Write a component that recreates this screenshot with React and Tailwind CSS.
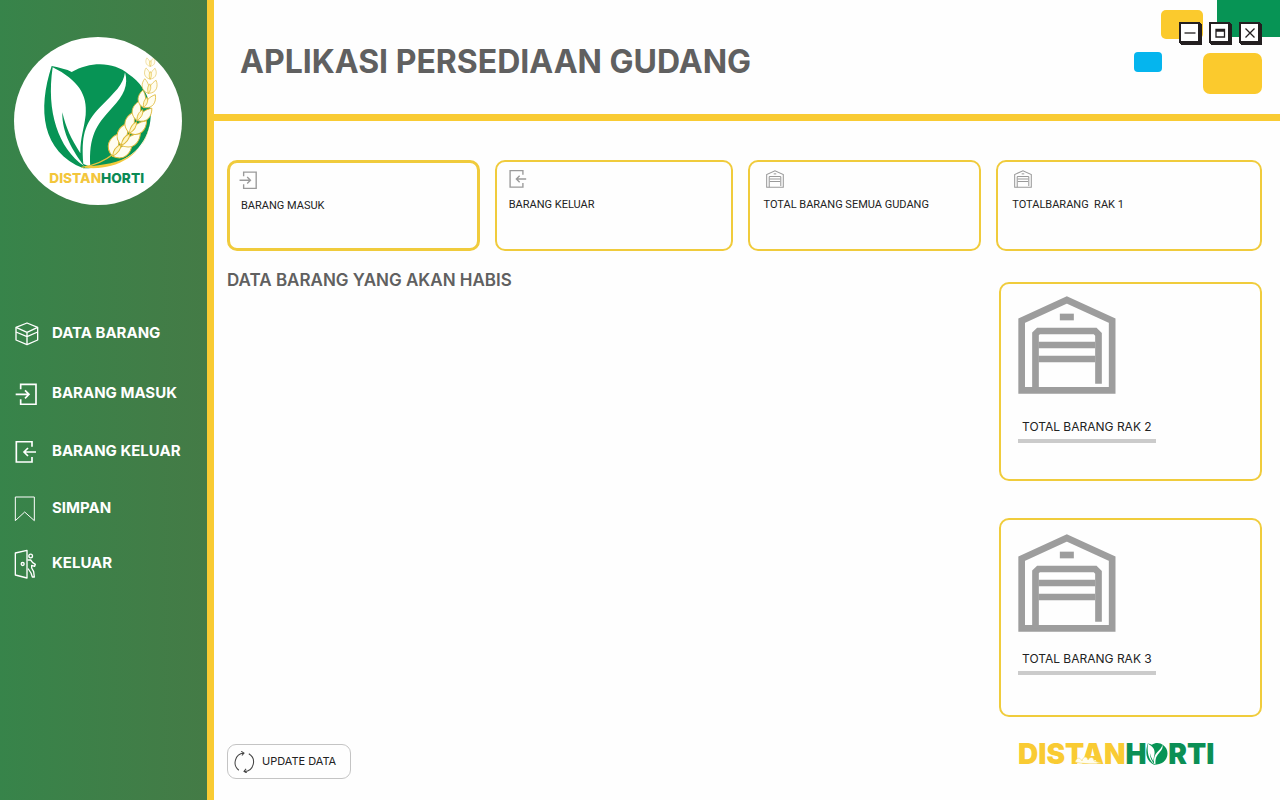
import React from "react";

function BoxIcon({ className }) {
  return (
    <svg viewBox="47 37 72 72" className={className} fill="none" stroke="currentColor" strokeWidth="4" strokeLinejoin="round" aria-hidden="true">
      <path d="M83 40 L115 53 V91 L83 105 L50 91 V53 Z" />
      <path d="M50 53 L83 68 L115 53 M50 67 L83 81 L115 67 M83 68 V105" />
    </svg>
  );
}

function EnterIcon({ className, stroke = 5 }) {
  return (
    <svg viewBox="46 213 66 66" className={className} fill="none" stroke="currentColor" strokeWidth={stroke} aria-hidden="true">
      <path d="M63 232 V217 H109 V277 H63 V262" />
      <path d="M48 247 H87 M76 235 L88 247 L76 259" />
    </svg>
  );
}

function LeaveIcon({ className, stroke = 5 }) {
  return (
    <svg viewBox="46 3 66 66" className={className} fill="none" stroke="currentColor" strokeWidth={stroke} aria-hidden="true">
      <path d="M97 20 V5 H50 V66 H97 V51" />
      <path d="M109 36 H73 M85 24 L73 36 L85 48" />
    </svg>
  );
}

function BookmarkIcon({ className }) {
  return (
    <svg viewBox="42 169 72 76" className={className} fill="none" stroke="currentColor" strokeWidth="3" aria-hidden="true">
      <path d="M46 171 H103 V242 L74 216 L46 242 Z" />
    </svg>
  );
}

function DoorIcon({ className }) {
  return (
    <svg viewBox="42 328 72 90" className={className} fill="none" stroke="currentColor" strokeWidth="4" strokeLinejoin="round" strokeLinecap="round" aria-hidden="true">
      <path d="M46 340 L81 332 V415 L46 406 Z" />
      <circle cx="68" cy="373" r="4.5" />
      <circle cx="92" cy="349" r="5.5" />
      <path d="M84 361 H92 L98 369 L106 374 L104 380 L95 377 V385 L101 396 L103 412 H97 L93 400 L85 388" />
    </svg>
  );
}

function GarageIcon({ className, stroke = 20 }) {
  return (
    <svg viewBox="86 79 293 294" className={className} fill="none" stroke="currentColor" strokeWidth={stroke} aria-hidden="true">
      <path d="M96.500 362 V153 L232 91 L368 153 V362 Z" />
      <path d="M138 362 V193 L147 184 H317 L327 194 V342" />
      <path d="M147 226 H317 M147 268 H317" />
      <path d="M211 142 H253" />
    </svg>
  );
}

function SyncIcon({ className }) {
  return (
    <svg viewBox="102 61 64 64" className={className} fill="none" stroke="currentColor" strokeWidth="3" aria-hidden="true">
      <path d="M119 117 A28 28 0 0 1 133 67 M126 62 L134 67 L128 74" />
      <path d="M148 69 A28 28 0 0 1 135 121 M142 125 L134 120 L140 113" />
    </svg>
  );
}

const grains = [
  [354, 386, 1, 36],
  [380, 354, 0.98, 36],
  [402, 318, 0.92, 32],
  [422, 281, 0.84, 28],
  [438, 243, 0.76, 20],
  [448, 202, 0.66, 8],
  [451, 163, 0.52, 2],
  [451, 128, 0.4, 0],
];

function LeafShapes() {
  return (
    <>
      <path
        d="M155 138 C180 144 200 147 215 156 C275 121 345 127 385 162 C455 208 468 290 436 352 C405 415 335 445 250 445 C125 395 112 270 155 138 Z"
        fill="#079455"
      />
      <path
        d="M158 142 C235 180 263 225 257 285 C252 330 241 350 241 400 C213 355 198 325 187 277 C185 340 220 395 252 438 C175 385 138 275 158 142 Z"
        fill="#fff"
      />
      <path
        d="M375 157 C386 195 372 226 335 265 C288 316 266 350 271 440 L250 432 C244 350 252 312 300 262 C344 216 370 196 375 157 Z"
        fill="#fff"
      />
    </>
  );
}

function Emblem() {
  return (
    <svg viewBox="42 51 504 504" className="size-42 rounded-full bg-white" role="img" aria-label="Distanhorti">
      <LeafShapes />
      <path d="M245 442 C290 436 315 422 340 402" fill="none" stroke="#e8c33c" strokeWidth="4" />
      <path d="M255 443 C330 452 430 420 449 312 C436 400 370 434 255 439 Z" fill="#f2c93c" />
      {grains.map(([x, y, s, r]) => (
        <g key={y} transform={`translate(${x} ${y}) rotate(${r}) scale(${s})`} fill="#fffdf0" stroke="#dfb93a" strokeWidth="3">
          <path d="M0 28 C-38 20 -40 -12 -26 -36 C-6 -20 4 4 0 28 Z" />
          <path d="M0 28 C-4 4 6 -20 26 -36 C40 -12 38 20 0 28 Z" />
          <path d="M0 28 C-10 10 -8 -4 0 -16 C8 -4 10 10 0 28 Z" fill="#fff6c4" />
        </g>
      ))}
      <text x="148" y="488" fontSize="41" fontWeight="800" fontFamily="Inter, sans-serif" fill="#f3c63c">
        DISTAN<tspan fill="#0b8a55">HORTI</tspan>
      </text>
    </svg>
  );
}

function Wordmark() {
  return (
    <p className="relative flex items-center text-[28px] leading-8 font-black text-[#f9cb33]">
      DISTAN
      <span className="text-[#0b8f55]">H</span>
      <span className="relative text-[#0b8f55]">
        O
        <svg viewBox="128 132 328 318" preserveAspectRatio="none" className="absolute inset-x-0 top-1 h-6 w-full bg-[#fefefe] py-px" aria-hidden="true">
          <LeafShapes />
        </svg>
      </span>
      <span className="text-[#0b8f55]">RTI</span>
      <svg viewBox="0 0 28 8" className="absolute bottom-1.5 left-14 h-2 w-7" fill="#fffdf0" stroke="#f3d76a" strokeWidth="0.6" aria-hidden="true">
        <path d="M1 6 C3 1 6 1 8 5 C9 0 13 0 14 4 C16 0 20 1 20 5 L27 7 C18 8 8 8 1 6 Z" />
      </svg>
    </p>
  );
}

const menu = [
  { label: "DATA BARANG", icon: <BoxIcon className="ml-px size-6 shrink-0" /> },
  { label: "BARANG MASUK", icon: <EnterIcon className="size-6 shrink-0 p-px" /> },
  { label: "BARANG KELUAR", icon: <LeaveIcon className="size-6 shrink-0 p-px" /> },
  { label: "SIMPAN", icon: <BookmarkIcon className="h-6.5 w-6" /> },
  { label: "KELUAR", icon: <DoorIcon className="h-7.5 w-6" /> },
];

const cards = [
  { label: "BARANG MASUK", icon: <EnterIcon className="size-4.5" />, box: "border-3 pt-2 pl-[9px]", indent: "pl-0.5" },
  { label: "BARANG KELUAR", icon: <LeaveIcon className="size-4.5" />, box: "border-2 pt-2 pl-3", indent: "" },
  { label: "TOTAL BARANG SEMUA GUDANG", icon: <GarageIcon stroke={17} className="ml-0.5 size-4.5" />, box: "border-2 pt-2 pl-3.5", indent: "" },
  { label: "TOTALBARANG  RAK 1", icon: <GarageIcon stroke={17} className="ml-0.5 size-4.5" />, box: "border-2 pt-2 pl-3.5", indent: "" },
];

function WindowButton({ label, children }) {
  return (
    <button
      type="button"
      aria-label={label}
      className="flex size-[21px] items-center justify-center border-2 border-[#231f20] bg-white text-[#231f20] shadow-[1px_1px_0_#231f20,2px_2px_0_#231f20]"
    >
      <svg viewBox="0 0 16 16" className="size-4 shrink-0" fill="none" stroke="currentColor" strokeWidth="1.300" aria-hidden="true">
        {children}
      </svg>
    </button>
  );
}

function RackPanel({ label, spacing }) {
  return (
    <article className={`flex h-[199px] flex-col items-start rounded-[10px] border-2 border-[#f0cc3c] px-[17px] ${spacing}`}>
      <GarageIcon className="size-[98px] text-[#9d9d9d]" />
      <h3 className="border-b-4 border-[#cbcbcb] px-1 pb-0.5 text-[12px] leading-5 text-[#222]">{label}</h3>
    </article>
  );
}

export default function App() {
  return (
    <div className="flex min-h-screen bg-[#fefefe] font-['Inter',sans-serif]">
      <aside className="w-[214px] shrink-0 border-r-7 border-[#f9cb33] bg-linear-to-r from-[#37844a] to-[#447b46] pt-[37px]">
        <div className="pl-3.5">
          <Emblem />
        </div>
        <nav className="mt-[98px] grid grid-rows-[61px_59px_57px_57px_53px] pl-3.5" aria-label="Menu">
          {menu.map((item) => (
            <a key={item.label} href="#" className="flex items-center gap-3.5 text-[15px] font-bold whitespace-nowrap text-white">
              <span className="flex w-6 shrink-0">{item.icon}</span>
              {item.label}
            </a>
          ))}
        </nav>
      </aside>

      <div className="flex min-w-0 flex-1 flex-col">
        <header className="relative flex h-[121px] items-center border-b-7 border-[#f9cb33] pt-2.5 pl-6.5">
          <h1 className="text-[32px] leading-10 font-bold text-[#606060]">APLIKASI PERSEDIAAN GUDANG</h1>
          <div aria-hidden="true">
            <div className="absolute top-0 right-0 h-[37px] w-[63px] bg-[#079455]" />
            <div className="absolute top-2.5 right-[77px] h-[29px] w-[42px] rounded-[5px] bg-[#fbca2d]" />
            <div className="absolute top-13 right-[118px] h-5 w-7 rounded-[4px] bg-[#05b5ee]" />
            <div className="absolute top-[53px] right-4.5 h-[41px] w-[59px] rounded-[7px] bg-[#fbca2d]" />
          </div>
          <div className="absolute top-[22px] right-5 flex gap-[9px]">
            <WindowButton label="Minimize">
              <path d="M2.500 8 H13.500" />
            </WindowButton>
            <WindowButton label="Maximize">
              <path d="M4 4.500 H12.500 V12 H4 Z" />
              <path d="M4 5.500 H12.500" strokeWidth="2.500" />
            </WindowButton>
            <WindowButton label="Close">
              <path d="M3.500 3.500 L12.500 12.500 M12.500 3.500 L3.500 12.500" />
            </WindowButton>
          </div>
        </header>

        <main className="flex flex-1 flex-col pt-[39px] pr-4.5 pb-5 pl-[13px]">
          <section className="grid grid-cols-[253fr_238fr_234fr_266fr] gap-[15px]">
            {cards.map((card) => (
              <article key={card.label} className={`h-[91px] rounded-[10px] border-[#f0cb3c] text-[#9a9a9a] ${card.box}`}>
                {card.icon}
                <h3 className={`mt-2 font-['Roboto',sans-serif] text-[11px] leading-[18px] whitespace-pre text-[#222] ${card.indent}`}>
                  {card.label}
                </h3>
              </article>
            ))}
          </section>

          <div className="flex flex-1 justify-between">
            <section className="flex flex-col items-start justify-between pt-[15px] pb-px">
              <h2 className="text-[17px] leading-7 font-semibold text-[#606060]">DATA BARANG YANG AKAN HABIS</h2>
              <button
                type="button"
                className="flex h-[35px] items-center gap-[7px] rounded-[9px] border border-[#c4c4c4] pr-3.5 pl-[5px] text-[11px] text-[#222]"
              >
                <SyncIcon className="size-5.5 text-[#444]" />
                UPDATE DATA
              </button>
            </section>
            <section className="flex w-[263px] flex-col pt-[31px]">
              <div className="flex flex-col gap-[37px]">
                <RackPanel label="TOTAL BARANG RAK 2" spacing="gap-[23px] pt-3" />
                <RackPanel label="TOTAL BARANG RAK 3" spacing="gap-[17px] pt-3.5" />
              </div>
              <div className="mt-[21px] pl-[19px]">
                <Wordmark />
              </div>
            </section>
          </div>
        </main>
      </div>
    </div>
  );
}
